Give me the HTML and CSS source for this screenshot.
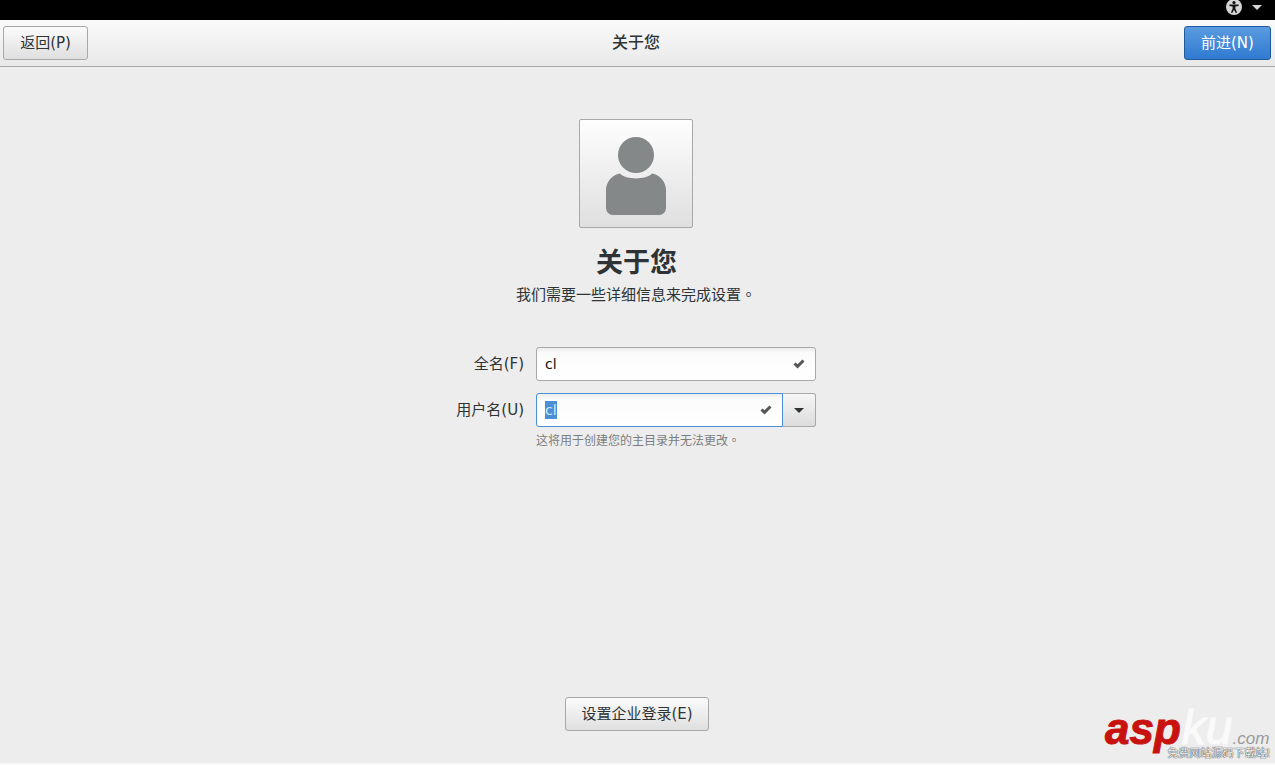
FILE: index.html
```html
<!DOCTYPE html>
<html lang="zh-CN">
<head>
<meta charset="utf-8">
<title>关于您</title>
<link rel="stylesheet" href="styles.css">
</head>
<body>
<div class="screen">
  <div class="topbar">
    <svg class="a11y" width="16" height="16" viewBox="0 0 16 16"><circle cx="8" cy="8" r="8" fill="#d6d6d6"/><circle cx="8" cy="3.6" r="1.6" fill="#111"/><path d="M3.4 5.6h9.2v1.3l-3.2.7v2.2l1.7 3.7-1.3.5L8 10.7l-1.8 3.300-1.300-.5 1.700-3.700V7.600l-3.200-.7z" fill="#111"/></svg>
    <svg class="caret" width="10" height="5" viewBox="0 0 10 5"><path d="M0 0h10L5 5z" fill="#d6d6d6"/></svg>
  </div>
  <header class="header">
    <button class="btn nav-btn">返回(P)</button>
    <div class="header-title">关于您</div>
    <button class="btn nav-btn primary">前进(N)</button>
  </header>
  <main class="content">
    <div class="avatar">
      <svg width="62" height="80" viewBox="0 0 62 80"><circle cx="31" cy="18" r="18" fill="#858888"/><path d="M15 36.500C21 43 41 43 47 36.500C55 38 61 45 61 53V71a7 7 0 0 1-7 7H8a7 7 0 0 1-7-7V53C1 45 7 38 15 36.500z" fill="#858888"/></svg>
    </div>
    <h1 class="title">关于您</h1>
    <p class="subtitle">我们需要一些详细信息来完成设置<span class="tc" lang="zh-TW">。</span></p>
    <div class="form">
      <label class="label">全名(F)</label>
      <div class="entry">
        <span class="value">cl</span>
        <svg class="check" width="12" height="10" viewBox="0 0 12 10"><path d="M.5 5.500L4.500 9.500 11.500 2.500 9.500.5 4.500 5.300 2.500 3.500z" fill="#555"/></svg>
      </div>
      <label class="label">用户名(U)</label>
      <div class="combo">
        <div class="entry focus">
          <span class="value selected">cl</span>
          <svg class="check" width="12" height="10" viewBox="0 0 12 10"><path d="M.5 5.500L4.500 9.500 11.500 2.500 9.500.5 4.500 5.300 2.500 3.500z" fill="#555"/></svg>
        </div>
        <div class="combo-btn"><svg width="10" height="5" viewBox="0 0 10 5"><path d="M0 0h10L5 5z" fill="#2e3436"/></svg></div>
      </div>
      <div class="hint">这将用于创建您的主目录并无法更改<span class="tc" lang="zh-TW">。</span></div>
    </div>
    <button class="btn enterprise">设置企业登录(E)</button>
  </main>
  <div class="watermark">
    <div class="wm-logo"><span class="wm-asp">asp</span><span class="wm-ku">ku</span><span class="wm-com">.com</span></div>
    <div class="wm-sub">免费网站源码下载站!</div>
  </div>
</div>
</body>
</html>
```
FILE: styles.css
```css
* { box-sizing: border-box; }
html, body { margin: 0; padding: 0; }
body {
  width: 1275px;
  height: 765px;
  overflow: hidden;
  font-family: "DejaVu Sans", "Noto Sans CJK SC", sans-serif;
  color: #2e3436;
  background: #ededed;
}
.tc { font-family: "Noto Sans CJK TC", sans-serif; }
.screen {
  position: relative;
  display: flex;
  flex-direction: column;
  width: 1275px;
  height: 765px;
}
.topbar {
  flex: none;
  height: 20px;
  background: #000;
  display: flex;
  align-items: center;
  justify-content: flex-end;
  padding: 0 13px 6px 0;
  gap: 10px;
}
.header {
  flex: none;
  height: 47px;
  display: flex;
  align-items: flex-start;
  justify-content: space-between;
  padding: 6px 4px 0 3px;
  background: linear-gradient(#fafafa, #e9e9e9);
  border-bottom: 1px solid #a9a9a9;
  box-shadow: 0 1px 0 #f2f2f2;
}
.header-title {
  margin-top: 6px;
  font-size: 16px;
  line-height: 21px;
  font-weight: 500;
  color: #2e3436;
}
.btn {
  font-family: inherit;
  font-size: 15px;
  line-height: 20px;
  color: #2e3436;
  height: 34px;
  padding: 0 0 1px;
  border: 1px solid #a8a8a8;
  border-radius: 3px;
  background: linear-gradient(#fbfbfb, #dfdfdf);
}
.nav-btn { width: 85px; }
.primary {
  width: 87px;
  color: #fff;
  border-color: #1f5a9c;
  background: linear-gradient(#5b9be0, #2f7ad0);
}
.content {
  flex: 1;
  display: flex;
  flex-direction: column;
  align-items: center;
  padding-top: 52px;
  background: #ededed;
  border-bottom: 2px solid #fafafa;
}
.avatar {
  width: 114px;
  height: 109px;
  margin-left: -3px;
  display: flex;
  justify-content: center;
  padding-top: 17px;
  border: 1px solid #a8a8a8;
  border-radius: 2px;
  background: linear-gradient(#fefefe, #dfdfdf);
}
.title {
  margin: 16px 0 0 -2px;
  font-size: 27px;
  line-height: 38px;
  font-weight: 700;
  color: #2e3436;
}
.subtitle {
  margin: 2px 0 0 -3px;
  font-size: 15px;
  line-height: 20px;
  color: #2e3436;
}
.form {
  display: grid;
  grid-template-columns: 80px 280px;
  column-gap: 11px;
  row-gap: 12px;
  margin-top: 42px;
  margin-left: -14px;
}
.label {
  display: flex;
  align-items: center;
  justify-content: flex-end;
  font-size: 15px;
  line-height: 20px;
  padding-bottom: 1px;
  color: #2e3436;
  padding-right: 1px;
}
.entry {
  display: flex;
  align-items: center;
  justify-content: space-between;
  flex: 1;
  height: 34px;
  padding: 0 10px 0 8px;
  font-size: 14px;
  color: #111;
  background: linear-gradient(#ececec 0, #fbfbfb 5px, #fff);
  border: 1px solid #a8a8a8;
  border-radius: 3px;
}
.value { line-height: 18px; }
.selected {
  color: #d5e6f8;
  background: #4a90d9;
}
.focus {
  border-color: #4a90d9;
  border-radius: 3px 0 0 3px;
}
.combo { display: flex; }
.combo-btn {
  flex: none;
  width: 33px;
  height: 34px;
  display: flex;
  align-items: center;
  justify-content: center;
  border: 1px solid #a8a8a8;
  border-left: 0;
  border-radius: 0 3px 3px 0;
  background: linear-gradient(#f6f6f6, #dcdcdc);
}
.hint {
  grid-column: 2;
  margin-top: -8px;
  font-size: 12px;
  line-height: 17px;
  color: #7d7f7f;
}
.enterprise {
  width: 144px;
  margin-top: auto;
  margin-bottom: 32px;
  margin-left: -1px;
}
.watermark {
  position: absolute;
  right: 4px;
  bottom: 3px;
  width: 166px;
  height: 54px;
  font-family: "Liberation Sans", sans-serif;
}
.wm-logo {
  position: absolute;
  left: 0;
  top: -5px;
  white-space: nowrap;
  font-style: italic;
  line-height: 50px;
}
.wm-asp { font-size: 44px; font-weight: 700; color: #c8120f; -webkit-text-stroke: 1px #c8120f; }
.wm-ku { font-size: 48px; color: #fafafa; -webkit-text-stroke: 1px #fafafa; margin-left: 1px; }
.wm-com { font-size: 17px; color: #9a9a9a; }
.wm-sub {
  position: absolute;
  right: 1px;
  bottom: 3px;
  font-family: "Noto Sans CJK SC", sans-serif;
  font-size: 11px;
  line-height: 13px;
  color: #f4f4f4;
  text-shadow: 0 0 1px #333, 0 0 1px #333;
  white-space: nowrap;
}
```
